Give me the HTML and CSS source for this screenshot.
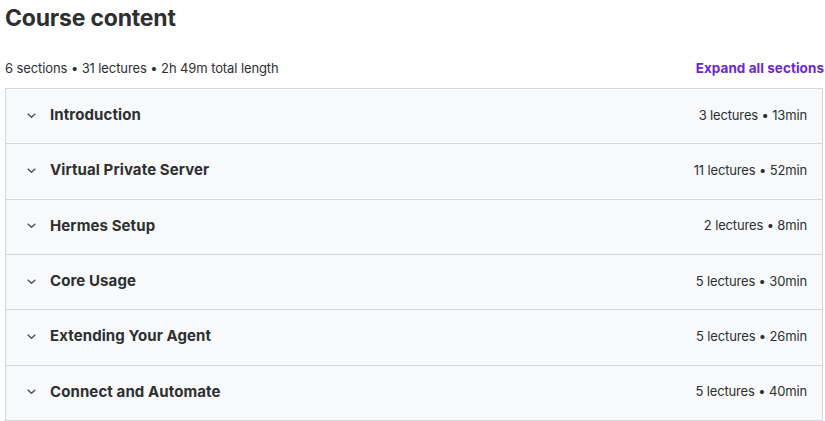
FILE: index.html
```html
<!DOCTYPE html>
<html>
<head>
<meta charset="utf-8">
<link rel="stylesheet" href="styles.css">
</head>
<body>
<div class="page">
  <h2 class="title">Course content</h2>
  <div class="summary">
    <span class="stats">6 sections • 31 lectures • 2h 49m total length</span>
    <button class="expand">Expand all sections</button>
  </div>
  <div class="sections">
    <div class="row"><span class="chev"><svg width="9" height="5" viewBox="0 0 9 5"><path d="M0.7 0.7l3.8 3.6 3.8-3.6" fill="none" stroke="#4a4d50" stroke-width="1.3"/></svg></span><span class="name">Introduction</span><span class="meta">3 lectures • 13min</span></div>
    <div class="row"><span class="chev"><svg width="9" height="5" viewBox="0 0 9 5"><path d="M0.7 0.7l3.8 3.6 3.8-3.6" fill="none" stroke="#4a4d50" stroke-width="1.3"/></svg></span><span class="name">Virtual Private Server</span><span class="meta">11 lectures • 52min</span></div>
    <div class="row"><span class="chev"><svg width="9" height="5" viewBox="0 0 9 5"><path d="M0.7 0.7l3.8 3.6 3.8-3.6" fill="none" stroke="#4a4d50" stroke-width="1.3"/></svg></span><span class="name">Hermes Setup</span><span class="meta">2 lectures • 8min</span></div>
    <div class="row"><span class="chev"><svg width="9" height="5" viewBox="0 0 9 5"><path d="M0.7 0.7l3.8 3.6 3.8-3.6" fill="none" stroke="#4a4d50" stroke-width="1.3"/></svg></span><span class="name">Core Usage</span><span class="meta">5 lectures • 30min</span></div>
    <div class="row"><span class="chev"><svg width="9" height="5" viewBox="0 0 9 5"><path d="M0.7 0.7l3.8 3.6 3.8-3.6" fill="none" stroke="#4a4d50" stroke-width="1.3"/></svg></span><span class="name">Extending Your Agent</span><span class="meta">5 lectures • 26min</span></div>
    <div class="row"><span class="chev"><svg width="9" height="5" viewBox="0 0 9 5"><path d="M0.7 0.7l3.8 3.6 3.8-3.6" fill="none" stroke="#4a4d50" stroke-width="1.3"/></svg></span><span class="name">Connect and Automate</span><span class="meta">5 lectures • 40min</span></div>
  </div>
</div>
</body>
</html>
```
FILE: styles.css
```css
* { box-sizing: border-box; }
html, body { margin: 0; padding: 0; background: #fff; }
body { font-family: Inter, "Noto Sans", sans-serif; color: #2d2f31; }
.page { padding: 0 1px 0 5px; }
.title {
  margin: 0;
  padding-top: 4px;
  font-size: 23px;
  line-height: 28px;
  font-weight: 700;
  letter-spacing: -0.2px;
}
.summary {
  display: flex;
  justify-content: space-between;
  align-items: center;
  margin-top: 26px;
  height: 20px;
  margin-bottom: 10px;
}
.stats { font-size: 13px; letter-spacing: -0.1px; }
.expand {
  border: 0; background: none; padding: 0;
  font-family: inherit;
  font-size: 13.5px;
  font-weight: 700;
  color: #6d28d2;
  letter-spacing: 0.05px;
}
.sections {
  border: 1px solid #d1d7dc;
  border-bottom: 0;
  margin-right: 1px;
}
.row {
  display: flex;
  align-items: center;
  height: 55.33px;
  background: #f7f9fa;
  border-bottom: 1px solid #d1d7dc;
  padding: 0 15px 3px 21px;
}
.chev { display: flex; width: 23px; align-items: center; padding-top: 1px; }
.name { font-size: 15px; font-weight: 700; letter-spacing: 0.1px; flex: 1; }
.meta { font-size: 13px; letter-spacing: -0.15px; }
```
